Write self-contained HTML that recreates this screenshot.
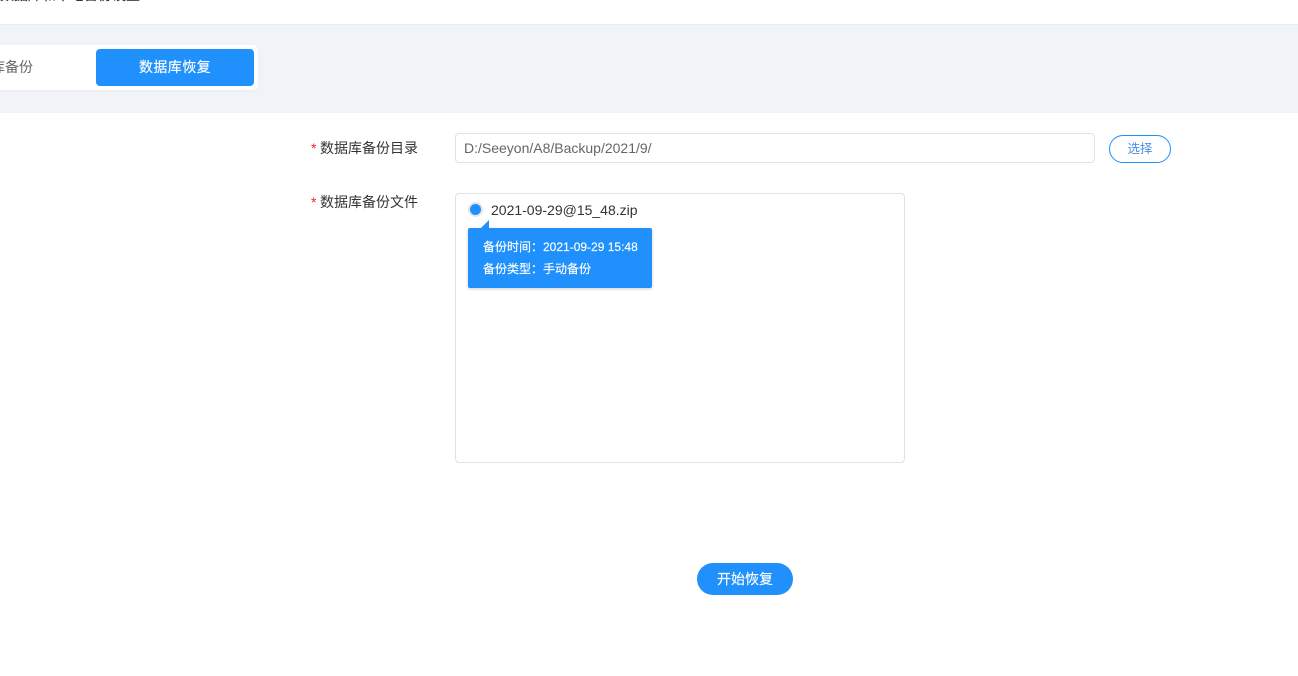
<!DOCTYPE html>
<html lang="zh">
<head>
<meta charset="utf-8">
<style>
html,body{margin:0;padding:0;background:#fff}
body{width:1298px;height:676px;position:relative;overflow:hidden;font-family:"Liberation Sans","Noto Sans CJK SC",sans-serif;font-size:14px;color:#333}
.a{position:absolute;white-space:nowrap}
.s{-webkit-text-stroke:.15px currentColor}
</style>
</head>
<body>
<div class="a s" style="left:0;top:-15px;font-size:14px;line-height:20px;color:#333">数据库和本地备份设置</div>
<div class="a" style="left:0;top:24px;width:1298px;height:89px;background:#f0f3f8;border-top:1px solid #e9ebee;box-sizing:border-box"></div>
<div class="a" style="left:-20px;top:45px;width:278px;height:45px;background:#fff;border-radius:5px;box-shadow:0 1px 3px rgba(0,0,0,.03)"></div>
<div class="a" style="left:-9px;top:59px;line-height:16px;color:#666">库备份</div>
<div class="a s" style="left:96px;top:49px;width:158px;height:37px;background:#2090fc;border-radius:4px;color:#fff;text-align:center;line-height:36px;font-size:14px;letter-spacing:.4px">数据库恢复</div>

<div class="a" style="left:311px;top:140px;line-height:16px"><span style="color:#f5222d">*</span> <span style="position:absolute;left:9px;top:0">数据库备份目录</span></div>
<div class="a" style="left:455px;top:133px;width:640px;height:30px;box-sizing:border-box;border:1px solid #dfe1e5;border-radius:4px;padding-left:8px;line-height:28px;font-size:14px;color:#666">D:/Seeyon/A8/Backup/2021/9/</div>
<div class="a" style="left:1109px;top:135px;width:62px;height:28px;box-sizing:border-box;border:1px solid #2090fc;border-radius:14px;color:#4a8fe6;text-align:center;line-height:26px;font-size:12.5px">选择</div>

<div class="a" style="left:311px;top:194px;line-height:16px"><span style="color:#f5222d">*</span> <span style="position:absolute;left:9px;top:0">数据库备份文件</span></div>
<div class="a" style="left:455px;top:193px;width:450px;height:270px;box-sizing:border-box;border:1px solid #dfe1e5;border-radius:4px"></div>
<div class="a" style="left:468px;top:202px;width:15px;height:15px;box-sizing:border-box;border:2px solid #e3e6ea;border-radius:50%;background:#2090fc"></div>
<div class="a" style="left:491px;top:201px;line-height:18px;font-size:14px;color:#333">2021-09-29@15_48.zip</div>
<svg class="a" style="left:480px;top:220px" width="10" height="9"><path d="M0 9L9 0V9Z" fill="#2090fc"/></svg>
<div class="a" style="left:468px;top:228px;width:184px;height:60px;background:#2090fc;border-radius:2px;box-shadow:0 1px 3px rgba(0,0,0,.2)"></div>
<div class="a s" style="left:483px;top:238px;line-height:18px;font-size:12px;color:#fff">备份时间：2021-09-29 15:48</div>
<div class="a s" style="left:483px;top:260px;line-height:18px;font-size:12px;color:#fff">备份类型：手动备份</div>

<div class="a s" style="left:697px;top:563px;width:96px;height:32px;background:#2090fc;border-radius:16px;color:#fff;text-align:center;line-height:32px;font-size:14px">开始恢复</div>
</body>
</html>
